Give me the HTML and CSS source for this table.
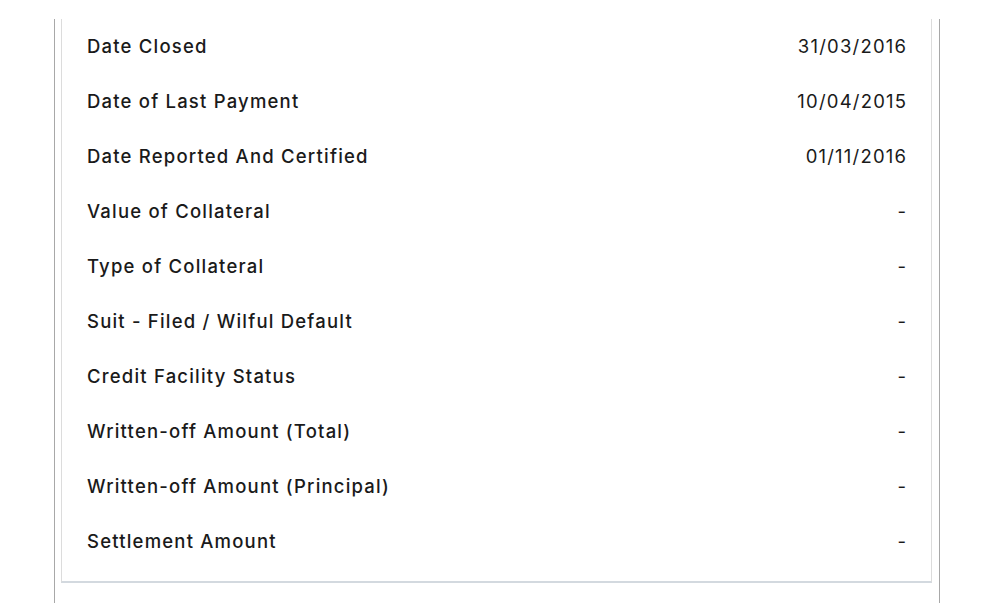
FILE: index.html
```html
<!DOCTYPE html>
<html lang="en">
<head>
    <title>Account Details</title>
    <link rel="stylesheet" href="styles.css">
</head>
<body>
    <div class="frame">
        <div class="card">
            <div class="row"><span class="label">Date Closed</span><span class="value">31/03/2016</span></div>
            <div class="row"><span class="label">Date of Last Payment</span><span class="value">10/04/2015</span></div>
            <div class="row"><span class="label">Date Reported And Certified</span><span class="value">01/11/2016</span></div>
            <div class="row"><span class="label">Value of Collateral</span><span class="value">-</span></div>
            <div class="row"><span class="label">Type of Collateral</span><span class="value">-</span></div>
            <div class="row"><span class="label">Suit - Filed / Wilful Default</span><span class="value">-</span></div>
            <div class="row"><span class="label">Credit Facility Status</span><span class="value">-</span></div>
            <div class="row"><span class="label">Written-off Amount (Total)</span><span class="value">-</span></div>
            <div class="row"><span class="label">Written-off Amount (Principal)</span><span class="value">-</span></div>
            <div class="row"><span class="label">Settlement Amount</span><span class="value">-</span></div>
        </div>
    </div>
</body>
</html>
```

FILE: styles.css
```css
body {
    margin: 0;
    padding-top: 19px;
    font-family: Inter, "Noto Sans", sans-serif;
    color: #1a1a1a;
    background: #fff;
}

.frame {
    width: 886px;
    margin-left: 54px;
    border-left: 1px solid #a8a8a8;
    border-right: 1px solid #a8a8a8;
    padding: 0 7px 20px 6px;
    min-height: 600px;
    box-sizing: border-box;
}

.card {
    border: 1px solid #dcdcdc;
    border-top: none;
    border-bottom: 2px solid #d3d9df;
    padding: 0 25px 12px 25px;
}

.row {
    display: flex;
    justify-content: space-between;
    align-items: center;
    height: 55px;
    padding-bottom: 2px;
    box-sizing: border-box;
    font-size: 18.5px;
    letter-spacing: 1.2px;
}

.label {
    font-weight: 500;
}

.value {
    font-weight: 400;
    margin-right: -1.2px;
}
```
